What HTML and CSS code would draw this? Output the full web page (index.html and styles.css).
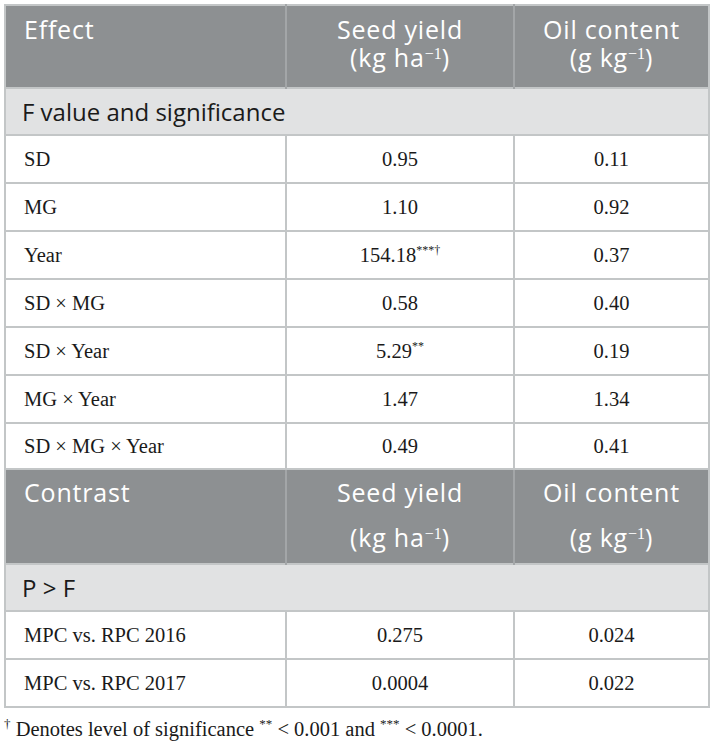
FILE: index.html
```html
<!DOCTYPE html>
<html lang="en">
<head>
  <meta charset="UTF-8" />
  <title>Seed yield and oil content</title>
  <link rel="stylesheet" href="styles.css">
</head>
<body>
<table class="stats">
  <colgroup>
    <col class="c-effect">
    <col class="c-yield">
    <col class="c-oil">
  </colgroup>
  <tr class="head">
    <th class="left">Effect</th>
    <th>Seed yield<br>(kg ha<sup>−1</sup>)</th>
    <th>Oil content<br>(g kg<sup>−1</sup>)</th>
  </tr>
  <tr class="section">
    <td colspan="3">F value and significance</td>
  </tr>
  <tr><td class="left">SD</td><td>0.95</td><td>0.11</td></tr>
  <tr><td class="left">MG</td><td>1.10</td><td>0.92</td></tr>
  <tr><td class="left">Year</td><td>154.18<sup class="mark">***†</sup></td><td>0.37</td></tr>
  <tr><td class="left">SD × MG</td><td>0.58</td><td>0.40</td></tr>
  <tr><td class="left">SD × Year</td><td>5.29<sup class="mark">**</sup></td><td>0.19</td></tr>
  <tr><td class="left">MG × Year</td><td>1.47</td><td>1.34</td></tr>
  <tr class="short"><td class="left">SD × MG × Year</td><td>0.49</td><td>0.41</td></tr>
  <tr class="head head2 top">
    <th class="left">Contrast</th>
    <th>Seed yield</th>
    <th>Oil content</th>
  </tr>
  <tr class="head head2 bottom">
    <th></th>
    <th>(kg ha<sup>−1</sup>)</th>
    <th>(g kg<sup>−1</sup>)</th>
  </tr>
  <tr class="section">
    <td colspan="3">P &gt; F</td>
  </tr>
  <tr><td class="left">MPC vs. RPC 2016</td><td>0.275</td><td>0.024</td></tr>
  <tr><td class="left">MPC vs. RPC 2017</td><td>0.0004</td><td>0.022</td></tr>
</table>
<p class="note"><sup>†</sup> Denotes level of significance <sup>**</sup> &lt; 0.001 and <sup>***</sup> &lt; 0.0001.</p>
</body>
</html>
```

FILE: styles.css
```css
body {
  margin: 0;
  background: #ffffff;
  color: #1a1a1a;
  font-family: "Liberation Serif", serif;
}
.stats {
  margin: 4px 0 0 4px;
  width: 704px;
  border-collapse: collapse;
  table-layout: fixed;
  border: 2px solid #c3c6c7;
}
.c-effect { width: 281px; }
.c-yield { width: 228px; }
.c-oil { width: 195px; }
.stats td {
  height: 46px;
  padding: 0 18px;
  border: 2px solid #c3c6c7;
  text-align: center;
  font-size: 20.5px;
  vertical-align: middle;
}
.stats td.left,
.stats th.left {
  text-align: left;
}
.stats tr.short td { height: 44px; }
.head th {
  background: #8d9092;
  color: #ffffff;
  font-family: "Open Sans", Lato, sans-serif;
  font-weight: 400;
  font-size: 25px;
  letter-spacing: 0.8px;
  line-height: 28px;
  text-align: center;
  vertical-align: top;
  padding: 9px 18px 8px;
  border-left: 2px solid #a3a6a8;
  border-right: 2px solid #a3a6a8;
  height: 64px;
}
.head th:first-child { border-left: 2px solid #c3c6c7; }
.head th:last-child { border-right: 2px solid #c3c6c7; }
.head sup {
  font-family: "Liberation Serif", serif;
  font-size: 16px;
  letter-spacing: 0;
  line-height: 0;
  vertical-align: 8px;
}
.head2 th {
  height: 43px;
  padding: 0 18px;
  vertical-align: middle;
  line-height: 28px;
}
.head2.top th { padding-bottom: 2px; }
.head2.bottom th { padding-bottom: 5px; }
.section td {
  background: #e1e2e3;
  text-align: left;
  font-family: "Open Sans", Lato, sans-serif;
  font-size: 24px;
  padding: 0 16px;
  height: 45px;
}
.mark {
  font-size: 12px;
  line-height: 0;
}
.note {
  margin: 8px 0 0 4px;
  font-size: 20.5px;
}
.note sup {
  font-size: 13px;
}
```
